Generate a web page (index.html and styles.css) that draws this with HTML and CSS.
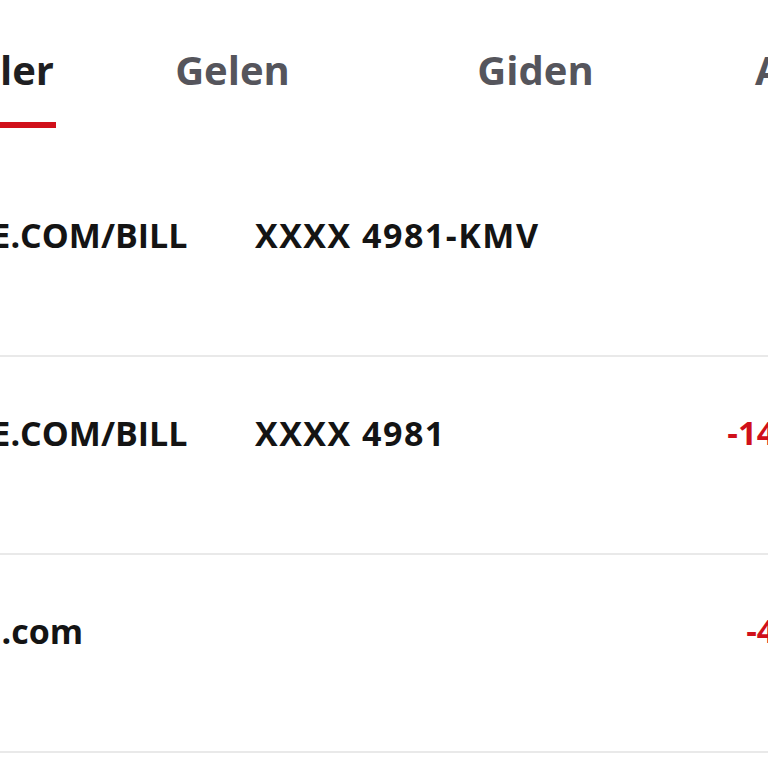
FILE: index.html
```html
<!DOCTYPE html>
<html lang="tr">
<head>
<meta charset="utf-8">
<title>Hesap Hareketleri</title>
<link rel="stylesheet" href="styles.css">
</head>
<body>
<div class="screen">
  <nav class="tabs">
    <div class="tab tab-active"><span class="tab-label">Tüm İşlemler</span></div>
    <div class="tab"><span class="tab-label">Gelen</span></div>
    <div class="tab"><span class="tab-label">Giden</span></div>
    <div class="tab tab-last"><span class="tab-label">Askıdaki</span></div>
  </nav>
  <ul class="list">
    <li class="row">
      <span class="merchant">APPLE.COM/BILL</span>
      <span class="card">XXXX 4981-KMV</span>
      <span class="amount"></span>
    </li>
    <li class="row">
      <span class="merchant">APPLE.COM/BILL</span>
      <span class="card">XXXX 4981</span>
      <span class="amount">-149,99 TL</span>
    </li>
    <li class="row">
      <span class="merchant">Temu.com</span>
      <span class="card"></span>
      <span class="amount">-49,99 TL</span>
    </li>
  </ul>
</div>
</body>
</html>
```

FILE: styles.css
```css
html, body {
  margin: 0;
  padding: 0;
  background: #ffffff;
  overflow: hidden;
}

.screen {
  width: 768px;
  height: 768px;
  overflow: hidden;
  font-family: "Open Sans", "Liberation Sans", sans-serif;
}

.tabs {
  display: flex;
  align-items: flex-start;
  height: 128px;
}

.tab {
  flex: 0 0 303px;
  min-width: 0;
  display: flex;
  justify-content: center;
  white-space: nowrap;
  padding-top: 46px;
  font-size: 40px;
  font-weight: 700;
  line-height: 48px;
  color: #55555c;
}

.tab-active {
  flex-basis: 56px;
  margin-right: 25px;
  justify-content: flex-end;
  color: #1f1f22;
}

.tab-active .tab-label {
  display: block;
  padding-bottom: 28px;
  border-bottom: 6px solid #d0101a;
  padding-right: 2px;
}

.tab-last {
  justify-content: flex-start;
  padding-left: 68px;
}

.list {
  list-style: none;
  margin: 31px 0 0;
  padding: 0;
  width: 888px;
}

.row {
  display: flex;
  align-items: flex-start;
  height: 196px;
  border-bottom: 2px solid #e9e9e9;
  font-size: 34px;
  font-weight: 700;
  line-height: 40px;
  color: #141414;
  white-space: nowrap;
}

.merchant {
  flex: 0 0 349px;
  min-width: 0;
  margin-left: -94px;
  margin-top: 56px;
}

.card {
  flex: 0 0 auto;
  margin-top: 56px;
  letter-spacing: 1.5px;
}

.amount {
  margin-left: auto;
  margin-top: 56px;
  font-size: 33px;
  color: #d0101a;
}
```
